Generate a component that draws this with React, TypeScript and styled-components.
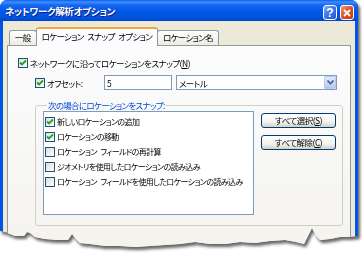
import React from 'react'
import styled, { createGlobalStyle } from 'styled-components'

const GlobalStyle = createGlobalStyle`
  html, body { margin: 0; padding: 0; background: #ffffff; }
  body {
    font-family: "Noto Sans CJK JP", "Noto Sans", sans-serif;
    font-size: 8.5px;
    letter-spacing: -0.5px;
    font-feature-settings: "palt";
    color: #000;
  }
`

// torn bottom edge of the screenshot
const tornEdge = `polygon(0 0, 358px 0, 358px 236px, 350px 237px, 340px 237px, 330px 239px, 320px 240px,
  316px 236px, 312px 228px, 308px 236px, 304px 244px, 296px 242px, 285px 240px, 270px 241px,
  255px 243px, 240px 242px, 225px 244px, 210px 244px, 195px 242px, 180px 244px, 165px 245px,
  150px 246px, 135px 247px, 120px 246px, 105px 246px, 90px 244px, 80px 243px, 75px 238px,
  72px 234px, 68px 240px, 58px 240px, 45px 239px, 35px 237px, 30px 233px, 27px 232px,
  24px 236px, 15px 236px, 5px 232px, 0 231px)`

const SP = '\u2002'

const Shadow = styled.div`
  width: 358px;
  filter: drop-shadow(2px 3px 1.5px rgba(0, 0, 0, 0.6));
`

const Window = styled.div`
  height: 254px;
  box-sizing: border-box;
  background: #ece9d8;
  border: 3px solid #0055e5;
  border-top: none;
  border-radius: 7px 7px 0 0;
  clip-path: ${tornEdge};
  display: flex;
  flex-direction: column;
`

const TitleBar = styled.div`
  height: 21px;
  margin: 0 -3px;
  padding: 0 4px 0 5px;
  display: flex;
  align-items: flex-start;
  background: linear-gradient(to bottom, #0a5ff5 0%, #3d8ef9 10%, #1565f0 25%, #0058e8 55%, #0052dc 85%, #0047c8 100%);
  border-radius: 7px 7px 0 0;
`

const Title = styled.div`
  flex: 1;
  color: #fff;
  font-weight: bold;
  font-size: 9.5px;
  letter-spacing: -0.3px;
  line-height: 22px;
  text-shadow: 1px 1px 0 #0f1c89;
`

const CapButton = styled.div<{ $close?: boolean }>`
  width: 14px;
  height: 15px;
  margin-top: 5px;
  margin-left: 3px;
  box-sizing: border-box;
  border: 1px solid #fff;
  border-radius: 3px;
  display: flex;
  align-items: center;
  justify-content: center;
  color: #fff;
  font-family: "Liberation Sans", sans-serif;
  font-weight: bold;
  font-size: 12px;
  letter-spacing: 0;
  background: ${p => p.$close
    ? 'linear-gradient(135deg, #f0a080 0%, #e0552c 45%, #c63a14 100%)'
    : 'linear-gradient(135deg, #8ab2fb 0%, #3c78f0 45%, #1f55d6 100%)'};
`

const Body = styled.div`
  flex: 1;
  padding: 6px 4px 0 4px;
  display: flex;
  flex-direction: column;
`

const TabRow = styled.div`
  display: flex;
  align-items: flex-end;
  height: 18px;
  padding-left: 2px;
`

const Tab = styled.div<{ $active?: boolean }>`
  position: relative;
  box-sizing: border-box;
  height: ${p => (p.$active ? 19 : 15)}px;
  margin: ${p => (p.$active ? '0 -1px -1px -1px' : '0')};
  padding: 0 5px;
  border: 1px solid #919b9c;
  border-bottom: none;
  border-top: ${p => (p.$active ? '2px solid #f4a63c' : '1px solid #919b9c')};
  border-radius: 3px 3px 0 0;
  background: ${p => (p.$active ? '#fcfcfe' : 'linear-gradient(to bottom, #ffffff, #ecebe6)')};
  z-index: ${p => (p.$active ? 1 : 0)};
  line-height: ${p => (p.$active ? 15 : 13)}px;
  letter-spacing: -0.7px;
  white-space: pre;
`

const Panel = styled.div`
  flex: 1;
  border: 1px solid #919b9c;
  background: linear-gradient(to bottom, #fcfcfe, #f4f3ee);
  padding: 10px 0 0 10px;
`

const Row = styled.div<{ $indent?: number }>`
  display: flex;
  align-items: center;
  height: ${p => (p.$indent ? 15 : 13)}px;
  margin-left: ${p => p.$indent ?? 0}px;
  margin-top: ${p => (p.$indent ? 6 : 0)}px;
  white-space: nowrap;
`

const Box = styled.span`
  flex: none;
  width: 10px;
  height: 10px;
  box-sizing: border-box;
  border: 1px solid #1c5180;
  background: linear-gradient(135deg, #dcdcd7, #ffffff);
  margin-right: 2px;
  display: flex;
  align-items: center;
  justify-content: center;
`

const Label = styled.span<{ $width?: number }>`
  display: inline-block;
  width: ${p => (p.$width ? `${p.$width}px` : 'auto')};
`

const Field = styled.div<{ $width: number }>`
  width: ${p => p.$width}px;
  height: 15px;
  box-sizing: border-box;
  border: 1px solid #7f9db9;
  background: #fff;
  display: flex;
  align-items: center;
  padding-left: 2px;
  margin-right: 4px;
`

const DropArrow = styled.div`
  margin-left: auto;
  width: 12px;
  height: 13px;
  box-sizing: border-box;
  border: 1px solid #b9c9ef;
  border-radius: 1px;
  background: linear-gradient(to bottom, #e1eafe, #b4c8f6);
  display: flex;
  align-items: center;
  justify-content: center;
`

const Group = styled.fieldset`
  margin: 9px 0 0 17px;
  width: 308px;
  box-sizing: border-box;
  border: 1px solid #d0d0bf;
  border-radius: 3px;
  padding: 0 5px 10px 7px;
  display: flex;
  gap: 7px;
  align-items: flex-start;
`

const Legend = styled.legend`
  color: #0046d5;
  padding: 0 1px;
  margin-left: 4px;
  line-height: 12px;
  letter-spacing: -0.7px;
`

const ListBox = styled.div`
  width: 211px;
  height: 104px;
  box-sizing: border-box;
  border: 1px solid #7f9db9;
  background: #fff;
  padding: 2px 0 0 1px;
  overflow: hidden;
`

const Item = styled.div`
  height: 15px;
  display: flex;
  align-items: center;
  white-space: pre;
  font-size: 8px;
  letter-spacing: -0.6px;
`

const ButtonCol = styled.div`
  display: flex;
  flex-direction: column;
  gap: 7px;
  margin-top: 2px;
`

const Button = styled.div`
  width: 75px;
  height: 15px;
  box-sizing: border-box;
  border: 1px solid #003c74;
  border-radius: 3px;
  background: linear-gradient(to bottom, #ffffff 0%, #f3f3ef 60%, #d6d0c5 100%);
  display: flex;
  align-items: center;
  justify-content: center;
  line-height: 13px;
`

const Check = ({ on }: { on?: boolean }) => (
  <Box>
    {on && (
      <svg width="8" height="8" viewBox="0 0 8 8">
        <path d="M1 3.5 L3 5.5 L7 1.5" fill="none" stroke="#21a121" strokeWidth="1.8" />
      </svg>
    )}
  </Box>
)

const items = [
  { text: '新しいロケーションの追加', on: true },
  { text: 'ロケーションの移動', on: true },
  { text: `ロケーション${SP}フィールドの再計算`, on: false },
  { text: 'ジオメトリを使用したロケーションの読み込み', on: false },
  { text: `ロケーション${SP}フィールドを使用したロケーションの読み込み`, on: false },
]

export default function App() {
  return (
    <>
      <GlobalStyle />
      <Shadow>
        <Window>
          <TitleBar>
            <Title>ネットワーク解析オプション</Title>
            <CapButton>?</CapButton>
            <CapButton $close>
              <svg width="8" height="8" viewBox="0 0 8 8">
                <path d="M1 1 L7 7 M7 1 L1 7" stroke="#fff" strokeWidth="1.8" />
              </svg>
            </CapButton>
          </TitleBar>
          <Body>
            <TabRow>
              <Tab>一般</Tab>
              <Tab $active>{`ロケーション${SP}スナップ${SP}オプション`}</Tab>
              <Tab>ロケーション名</Tab>
            </TabRow>
            <Panel>
              <Row>
                <Check on />
                ネットワークに沿ってロケーションをスナップ(<u>N</u>)
              </Row>
              <Row $indent={17}>
                <Check on />
                <Label $width={57}>オフセット:</Label>
                <Field $width={68}>5</Field>
                <Field $width={161}>
                  メートル
                  <DropArrow>
                    <svg width="7" height="5" viewBox="0 0 7 5">
                      <path d="M0.5 0.5 L3.5 3.5 L6.5 0.5" fill="none" stroke="#4d6185" strokeWidth="1.6" />
                    </svg>
                  </DropArrow>
                </Field>
              </Row>
              <Group>
                <Legend>次の場合にロケーションをスナップ:</Legend>
                <ListBox>
                  {items.map((it, i) => (
                    <Item key={i}>
                      <Check on={it.on} />
                      {it.text}
                    </Item>
                  ))}
                </ListBox>
                <ButtonCol>
                  <Button>すべて選択(<u>S</u>)</Button>
                  <Button>すべて解除(<u>C</u>)</Button>
                </ButtonCol>
              </Group>
            </Panel>
          </Body>
        </Window>
      </Shadow>
    </>
  )
}
